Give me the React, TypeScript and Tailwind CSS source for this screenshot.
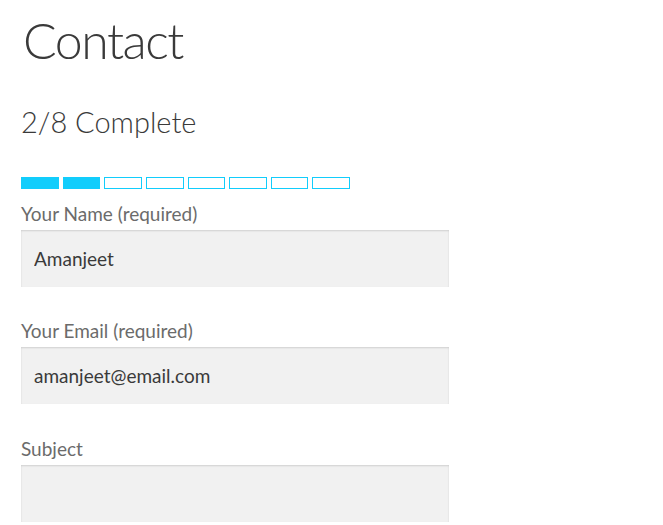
const fieldFont = { fontFamily: "Lato, 'Open Sans', sans-serif" };

function Field({ label, value, top }: { label: string; value: string; top: string }) {
  return (
    <div className={`flex flex-col ${top}`}>
      <label className="block text-[19px] leading-[19px] text-[#6b6b6b]" style={fieldFont}>
        {label}
      </label>
      <input
        readOnly
        value={value}
        className="mt-[7px] h-[57px] w-[428px] border-0 bg-[#f1f1f1] pl-[13px] text-[19px] text-[#3a3a3a] shadow-[inset_0_1px_2px_rgba(0,0,0,0.14)] outline-none"
        style={fieldFont}
      />
    </div>
  );
}

export default function App() {
  const steps = [true, true, false, false, false, false, false, false];
  return (
    <div className="min-h-[525px] bg-white pl-[21px] text-[#3a3a3a]" style={fieldFont}>
      <h1 className="pl-[2px] pt-[15px] text-[50px] font-light leading-[50px] tracking-[-1.5px] text-[#3a3a3a]">
        Contact
      </h1>
      <h2 className="mt-[42px] text-[29px] font-light leading-[29px] text-[#3a3a3a]">2/8 Complete</h2>
      <div className="mt-[41px] grid h-[12px] w-[329px] grid-cols-8 gap-[4px]">
        {steps.map((done, i) =>
          done ? (
            <div key={i} className="bg-[#12cdfc]" />
          ) : (
            <div key={i} className="border border-[#12cdfc] bg-white" />
          )
        )}
      </div>
      <Field label="Your Name (required)" value="Amanjeet" top="mt-[15px]" />
      <Field label="Your Email (required)" value="amanjeet@email.com" top="mt-[34px]" />
      <Field label="Subject" value="" top="mt-[35px]" />
    </div>
  );
}
